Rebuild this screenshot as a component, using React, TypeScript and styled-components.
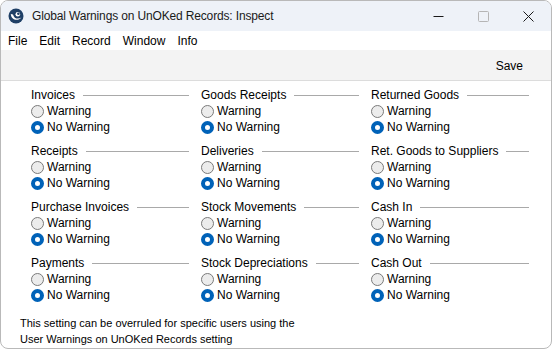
import styled, { createGlobalStyle } from 'styled-components'

const Global = createGlobalStyle`
	html, body {
		margin: 0;
		padding: 0;
		background: #ffffff;
	}
	body {
		font-family: 'Liberation Sans', Arial, sans-serif;
		font-size: 12px;
		color: #000;
	}
`

const Window = styled.div`
	width: 552px;
	height: 349px;
	box-sizing: border-box;
	border: 1px solid #b9b9b9;
	border-radius: 8px;
	overflow: hidden;
	display: flex;
	flex-direction: column;
	background: #fff;
`

const TitleBar = styled.div`
	height: 30px;
	display: flex;
	align-items: center;
	background: #eef2f8;
	padding-left: 7px;
`

const Title = styled.span`
	margin-left: 8px;
	font-size: 12px;
	letter-spacing: -0.15px;
	color: #1a1a1a;
	flex: 1;
`

const WinButton = styled.div`
	width: 45px;
	height: 30px;
	display: flex;
	align-items: center;
	justify-content: center;
`

const MenuBar = styled.div`
	height: 19px;
	display: flex;
	align-items: center;
	padding-left: 7px;
	background: #fff;
`

const MenuItem = styled.span`
	margin-right: 12px;
	font-size: 12px;
`

const Toolbar = styled.div`
	height: 31px;
	background: #f3f3f3;
	border-bottom: 1px solid #dcdcdc;
	display: flex;
	align-items: center;
	justify-content: flex-end;
	padding-right: 28px;
	padding-top: 2px;
	box-sizing: border-box;
`

const Content = styled.div`
	flex: 1;
	padding: 6px 0 0 30px;
`

const Grid = styled.div`
	display: grid;
	grid-template-columns: repeat(3, 170px);
	row-gap: 8px;
`

const Group = styled.div`
	display: flex;
	flex-direction: column;
`

const Header = styled.div`
	display: flex;
	align-items: center;
	height: 16px;
	padding-right: 12px;
`

const Rule = styled.div`
	flex: 1;
	height: 1px;
	background: #a9a9a9;
	margin-left: 8px;
`

const Option = styled.label`
	display: flex;
	align-items: center;
	height: 16px;
	gap: 3px;
`

const Radio = styled.span<{ $on: boolean }>`
	width: 13px;
	height: 13px;
	box-sizing: border-box;
	border-radius: 50%;
	border: ${({ $on }) => ($on ? '4px solid #0062b8' : '1px solid #7a7a7a')};
	background: ${({ $on }) => ($on ? '#fff' : '#ececec')};
`

const Footer = styled.div`
	margin: 12px 0 0 -11px;
	line-height: 16px;
	font-size: 11px;
`

const groups = [
	'Invoices',
	'Goods Receipts',
	'Returned Goods',
	'Receipts',
	'Deliveries',
	'Ret. Goods to Suppliers',
	'Purchase Invoices',
	'Stock Movements',
	'Cash In',
	'Payments',
	'Stock Depreciations',
	'Cash Out',
]

function Logo() {
	return (
		<svg width="16" height="16" viewBox="0 0 16 16">
			<circle cx="8" cy="8" r="7.5" fill="#1e3f66" />
			<path d="M2.8 6 C3 11.5 9.5 14 13.5 9.5 C10.5 11.5 6 11 5 6.5 Z" fill="#fff" />
			<circle cx="9.8" cy="6.3" r="2.3" fill="#fff" />
			<circle cx="10.4" cy="5.8" r="1.3" fill="#1e3f66" />
		</svg>
	)
}

export default function App() {
	return (
		<>
			<Global />
			<Window>
				<TitleBar>
					<Logo />
					<Title>Global Warnings on UnOKed Records: Inspect</Title>
					<WinButton>
						<svg width="11" height="11" viewBox="0 0 11 11">
							<path d="M0.5 5.5 H10.5" stroke="#1a1a1a" strokeWidth="1" />
						</svg>
					</WinButton>
					<WinButton>
						<svg width="11" height="11" viewBox="0 0 11 11">
							<rect x="0.5" y="0.5" width="10" height="10" rx="1" fill="none" stroke="#b5b5b5" />
						</svg>
					</WinButton>
					<WinButton>
						<svg width="11" height="11" viewBox="0 0 11 11">
							<path d="M0.5 0.5 L10.5 10.5 M10.5 0.5 L0.5 10.5" stroke="#1a1a1a" strokeWidth="1" />
						</svg>
					</WinButton>
				</TitleBar>
				<MenuBar>
					<MenuItem>File</MenuItem>
					<MenuItem>Edit</MenuItem>
					<MenuItem>Record</MenuItem>
					<MenuItem>Window</MenuItem>
					<MenuItem>Info</MenuItem>
				</MenuBar>
				<Toolbar>Save</Toolbar>
				<Content>
					<Grid>
						{groups.map((g) => (
							<Group key={g}>
								<Header>
									{g}
									<Rule />
								</Header>
								<Option>
									<Radio $on={false} />
									Warning
								</Option>
								<Option>
									<Radio $on={true} />
									No Warning
								</Option>
							</Group>
						))}
					</Grid>
					<Footer>
						This setting can be overruled for specific users using the
						<br />
						User Warnings on UnOKed Records setting
					</Footer>
				</Content>
			</Window>
		</>
	)
}
